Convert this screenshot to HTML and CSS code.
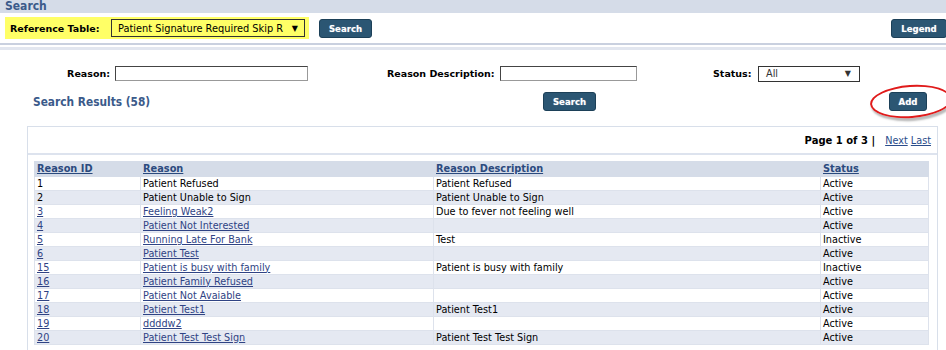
FILE: index.html
```html
<!DOCTYPE html>
<html>

<head>
    <meta charset="UTF-8">
    <title>Reference Table Search</title>
    <link rel="stylesheet" href="styles.css">
</head>

<body>

    <div class="title-bar">Search</div>

    <div class="ref-bar">
        <div class="ref-pick">
            <span class="ref-label">Reference Table:</span>
            <div class="fake-select ref-select">
                <span>Patient Signature Required Skip R</span>
                <span class="arrow">&#9660;</span>
            </div>
        </div>
        <button class="btn ref-search">Search</button>
        <span class="spacer"></span>
        <button class="btn legend">Legend</button>
    </div>
    <div class="rule"></div>
    <div class="rule-light"></div>

    <div class="filters">
        <label class="f-label reason-label">Reason:</label>
        <input type="text" class="f-input reason-input">
        <label class="f-label desc-label">Reason Description:</label>
        <input type="text" class="f-input desc-input">
        <label class="f-label status-label">Status:</label>
        <div class="fake-select status-select">
            <span>All</span>
            <span class="arrow">&#9660;</span>
        </div>
    </div>

    <div class="actions">
        <span class="results-title">Search Results (58)</span>
        <button class="btn mid-search">Search</button>
        <div class="add-wrap">
            <button class="btn add">Add</button>
            <span class="circle"></span>
        </div>
    </div>

    <div class="panel">
        <div class="pager">
            <b>Page 1 of 3 |</b>
            <a href="#" class="next">Next</a>
            <a href="#">Last</a>
        </div>
        <div class="table-wrap">
            <table class="grid">
                <thead>
                    <tr>
                        <th class="c-id"><a href="#">Reason ID</a></th>
                        <th class="c-reason"><a href="#">Reason</a></th>
                        <th class="c-desc"><a href="#">Reason Description</a></th>
                        <th class="c-status"><a href="#">Status</a></th>
                    </tr>
                </thead>
                <tbody>
                    <tr><td>1</td><td>Patient Refused</td><td>Patient Refused</td><td>Active</td></tr>
                    <tr><td>2</td><td>Patient Unable to Sign</td><td>Patient Unable to Sign</td><td>Active</td></tr>
                    <tr><td><a href="#">3</a></td><td><a href="#">Feeling Weak2</a></td><td>Due to fever not feeling well</td><td>Active</td></tr>
                    <tr><td><a href="#">4</a></td><td><a href="#">Patient Not Interested</a></td><td></td><td>Active</td></tr>
                    <tr><td><a href="#">5</a></td><td><a href="#">Running Late For Bank</a></td><td>Test</td><td>Inactive</td></tr>
                    <tr><td><a href="#">6</a></td><td><a href="#">Patient Test</a></td><td></td><td>Active</td></tr>
                    <tr><td><a href="#">15</a></td><td><a href="#">Patient is busy with family</a></td><td>Patient is busy with family</td><td>Inactive</td></tr>
                    <tr><td><a href="#">16</a></td><td><a href="#">Patient Family Refused</a></td><td></td><td>Active</td></tr>
                    <tr><td><a href="#">17</a></td><td><a href="#">Patient Not Avaiable</a></td><td></td><td>Active</td></tr>
                    <tr><td><a href="#">18</a></td><td><a href="#">Patient Test1</a></td><td>Patient Test1</td><td>Active</td></tr>
                    <tr><td><a href="#">19</a></td><td><a href="#">ddddw2</a></td><td></td><td>Active</td></tr>
                    <tr><td><a href="#">20</a></td><td><a href="#">Patient Test Test Sign</a></td><td>Patient Test Test Sign</td><td>Active</td></tr>
                </tbody>
            </table>
        </div>
    </div>

</body>

</html>
```

FILE: styles.css
```css
* {
    box-sizing: border-box;
}

html,
body {
    margin: 0;
    padding: 0;
    background: #fff;
    overflow: hidden;
}

body {
    font-family: "DejaVu Sans", sans-serif;
    font-size: 9.7px;
    color: #000;
    width: 946px;
    height: 350px;
}

.title-bar {
    height: 13px;
    line-height: 13px;
    padding-left: 5px;
    background: #d5dce8;
    color: #3b5a8a;
    font-family: "DejaVu Sans Condensed", "DejaVu Sans", sans-serif;
    font-weight: bold;
    font-size: 12px;
}

.ref-bar {
    display: flex;
    align-items: center;
    height: 30px;
    padding-left: 5px;
}

.ref-pick {
    display: flex;
    align-items: center;
    width: 304px;
    height: 22px;
    padding-left: 5px;
    background: #ffff66;
}

.ref-label {
    font-weight: bold;
    font-size: 9.5px;
    width: 101px;
}

.fake-select {
    display: flex;
    align-items: center;
    justify-content: space-between;
    border: 1px solid #333;
    height: 18px;
}

.fake-select .arrow {
    font-size: 8px;
}

.ref-select {
    width: 194px;
    padding: 0 6px 0 6px;
    font-size: 9.8px;
}

.btn {
    font-family: "DejaVu Sans Condensed", "DejaVu Sans", sans-serif;
    font-weight: bold;
    font-size: 9.5px;
    color: #fff;
    background: #2b5673;
    border: 1px solid #1c4058;
    border-radius: 3px;
    height: 19px;
    padding: 0;
    text-shadow: 0 0 1px #9ab;
}

.ref-search {
    width: 53px;
    margin-left: 10px;
}

.spacer {
    flex: 1;
}

.legend {
    width: 56px;
    margin-right: -1px;
}

.rule {
    height: 2px;
    background: #c9d0df;
}

.rule-light {
    height: 3px;
    margin-top: 2px;
    background: #e2e6ef;
}

.filters {
    display: flex;
    align-items: center;
    margin-top: 16px;
    height: 15px;
}

.f-label {
    font-weight: bold;
    font-size: 9.5px;
    white-space: nowrap;
}

.reason-label {
    width: 110px;
    text-align: right;
}

.f-input {
    height: 15px;
    border: 1px solid #444;
    border-right-color: #999;
    border-bottom-color: #999;
    margin: 0 0 0 5px;
    padding: 0;
}

.reason-input {
    width: 193px;
}

.desc-label {
    width: 108px;
    margin-left: 79px;
}

.desc-input {
    width: 137px;
}

.status-label {
    width: 41px;
    margin-left: 76px;
}

.status-select {
    width: 102px;
    height: 16px;
    margin-left: 4px;
    padding: 0 8px 0 7px;
    color: #333;
}

.actions {
    display: flex;
    align-items: center;
    height: 19px;
    margin-top: 11px;
}

.results-title {
    width: 543px;
    padding-left: 33px;
    font-family: "DejaVu Sans Condensed", "DejaVu Sans", sans-serif;
    font-weight: bold;
    font-size: 11.8px;
    color: #3b5a8a;
}

.mid-search {
    width: 53px;
}

.add-wrap {
    position: relative;
    margin-left: 293px;
}

.add {
    width: 38px;
}

.circle {
    position: absolute;
    left: -19px;
    top: -7px;
    width: 82px;
    height: 33px;
    border: 2px solid #e01b1b;
    border-radius: 50%;
    box-shadow: 1px 3px 2px #bbb;
    transform: rotate(-4deg);
}

.panel {
    margin: 15px 0 0 27px;
    width: 911px;
    height: 250px;
    border: 1px solid #d8dfea;
    border-bottom: none;
}

.pager {
    height: 28px;
    border-bottom: 2px solid #dde3ee;
    text-align: right;
    padding: 8px 6px 0 0;
    font-size: 9.7px;
}

.pager b {
    font-size: 10px;
}

.pager a {
    color: #2a4c8a;
}

.pager .next {
    margin-left: 7px;
}

.table-wrap {
    padding: 6px 7px 0 6px;
}

.grid {
    width: 895px;
    border-collapse: collapse;
}

.grid th,
.grid td {
    height: 14px;
    padding: 0 2px;
    line-height: 12px;
    text-align: left;
    border: 1px solid #dde2ec;
    white-space: nowrap;
}

.grid th {
    height: 15px;
    background: #d5dce8;
    border-color: #d5dce8;
    font-size: 9.8px;
}

.grid th a {
    color: #2b4a7e;
}

.grid td a {
    color: #2f4384;
}

.grid tbody tr:nth-child(even) td {
    background: #e5e9f2;
}

.c-id {
    width: 106px;
}

.c-reason {
    width: 293px;
}

.c-desc {
    width: 387px;
}
```
